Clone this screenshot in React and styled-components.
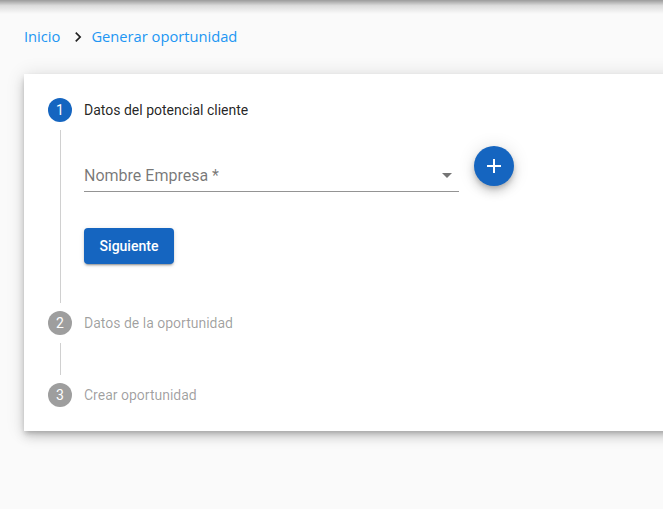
import React from "react";
import styled, { createGlobalStyle } from "styled-components";

const GlobalStyle = createGlobalStyle`
  html, body {
    margin: 0;
    padding: 0;
    background-color: #fafafa;
    overflow: hidden;
  }
  body {
    font-family: Roboto, "Liberation Sans", Arial, sans-serif;
  }
`;

const steps = [
  { n: 1, label: "Datos del potencial cliente" },
  { n: 2, label: "Datos de la oportunidad" },
  { n: 3, label: "Crear oportunidad" },
];

const App = () => {
  return (
    <StPage>
      <GlobalStyle />
      <StTopShade />
      <StBreadcrumb>
        <StCrumbLink>Inicio</StCrumbLink>
        <StChevron viewBox="0 0 24 24">
          <path d="M8.6 16.6 13.2 12 8.6 7.4 10 6l6 6-6 6z" />
        </StChevron>
        <StCrumbLink>Generar oportunidad</StCrumbLink>
      </StBreadcrumb>

      <StCard>
        {steps.map((step, i) => (
          <React.Fragment key={step.n}>
            <StStep>
              <StStepIcon $active={i === 0}>{step.n}</StStepIcon>
              <StStepLabel $active={i === 0}>{step.label}</StStepLabel>
            </StStep>
            {i === 0 && (
              <StStepContent>
                <StFieldRow>
                  <StSelectField>
                    <StFieldLabel>Nombre Empresa *</StFieldLabel>
                    <StArrow viewBox="0 0 24 24">
                      <path d="M7 10l5 5 5-5z" />
                    </StArrow>
                  </StSelectField>
                  <StFab type="button">
                    <svg viewBox="0 0 24 24" width="24" height="24">
                      <path d="M19 13h-6v6h-2v-6H5v-2h6V5h2v6h6v2z" fill="#fff" />
                    </svg>
                  </StFab>
                </StFieldRow>
                <StButton type="button">Siguiente</StButton>
              </StStepContent>
            )}
            {i === 1 && (
              <StConnector>
                <span />
              </StConnector>
            )}
          </React.Fragment>
        ))}
      </StCard>
    </StPage>
  );
};

export default App;

const StPage = styled.div`
  min-height: 509px;
  background-color: #fafafa;
`;

const StTopShade = styled.div`
  height: 14px;
  margin-bottom: -14px;
  background: linear-gradient(
    rgba(0, 0, 0, 0.38),
    rgba(0, 0, 0, 0.12) 40%,
    rgba(0, 0, 0, 0)
  );
`;

const StBreadcrumb = styled.div`
  display: flex;
  align-items: center;
  padding: 24px 24px 0;
  height: 24px;
  font-family: "Open Sans", "Noto Sans", sans-serif;
  font-size: 14.7px;
`;

const StCrumbLink = styled.span`
  color: #2196f3;
`;

const StChevron = styled.svg`
  width: 20px;
  height: 20px;
  margin: 1px 3px 0 8px;
  fill: #222;
`;

const StCard = styled.div`
  margin: 26px 0 0 24px;
  width: 720px;
  background: #fff;
  padding: 24px;
  box-sizing: border-box;
  box-shadow: 0px 3px 5px -1px rgba(0, 0, 0, 0.2),
    0px 6px 10px 0px rgba(0, 0, 0, 0.14), 0px 1px 18px 0px rgba(0, 0, 0, 0.12);
`;

const StStep = styled.div`
  display: flex;
  align-items: center;
  height: 24px;
`;

const StStepIcon = styled.div`
  width: 24px;
  height: 24px;
  border-radius: 50%;
  background-color: ${(p) => (p.$active ? "#1565c0" : "#9e9e9e")};
  color: #fff;
  font-size: 14px;
  display: flex;
  align-items: center;
  justify-content: center;
  margin-right: 12px;
`;

const StStepLabel = styled.span`
  font-size: 14px;
  color: ${(p) => (p.$active ? "rgba(0, 0, 0, 0.87)" : "rgba(0, 0, 0, 0.38)")};
`;

const StStepContent = styled.div`
  margin: 8px 0 8px 12px;
  padding: 16px 8px 39px 23px;
  border-left: 1px solid #d0d0d0;
`;

const StFieldRow = styled.div`
  display: flex;
  align-items: flex-start;
  gap: 15px;
`;

const StSelectField = styled.div`
  width: 375px;
  height: 46px;
  border-bottom: 1px solid rgba(0, 0, 0, 0.42);
  display: flex;
  align-items: flex-end;
  justify-content: space-between;
  padding-bottom: 6px;
  box-sizing: border-box;
`;

const StFieldLabel = styled.span`
  font-size: 16px;
  color: rgba(0, 0, 0, 0.54);
  line-height: 19px;
`;

const StArrow = styled.svg`
  width: 24px;
  height: 24px;
  fill: rgba(0, 0, 0, 0.54);
  margin-bottom: -2px;
`;

const StFab = styled.button`
  width: 40px;
  height: 40px;
  border: none;
  border-radius: 50%;
  background-color: #1565c0;
  display: flex;
  align-items: center;
  justify-content: center;
  padding: 0;
  cursor: pointer;
  box-shadow: 0px 3px 5px -1px rgba(0, 0, 0, 0.2),
    0px 6px 10px 0px rgba(0, 0, 0, 0.14), 0px 1px 18px 0px rgba(0, 0, 0, 0.12);
`;

const StButton = styled.button`
  margin-top: 36px;
  width: 90px;
  height: 36px;
  border: none;
  border-radius: 4px;
  background-color: #1565c0;
  color: #fff;
  font-family: Roboto, "Liberation Sans", Arial, sans-serif;
  font-size: 14px;
  font-weight: 500;
  cursor: pointer;
  box-shadow: 0px 3px 1px -2px rgba(0, 0, 0, 0.2),
    0px 2px 2px 0px rgba(0, 0, 0, 0.14), 0px 1px 5px 0px rgba(0, 0, 0, 0.12);
`;

const StConnector = styled.div`
  margin-left: 12px;
  padding: 8px 0;
  span {
    display: block;
    height: 32px;
    border-left: 1px solid #d0d0d0;
  }
`;
